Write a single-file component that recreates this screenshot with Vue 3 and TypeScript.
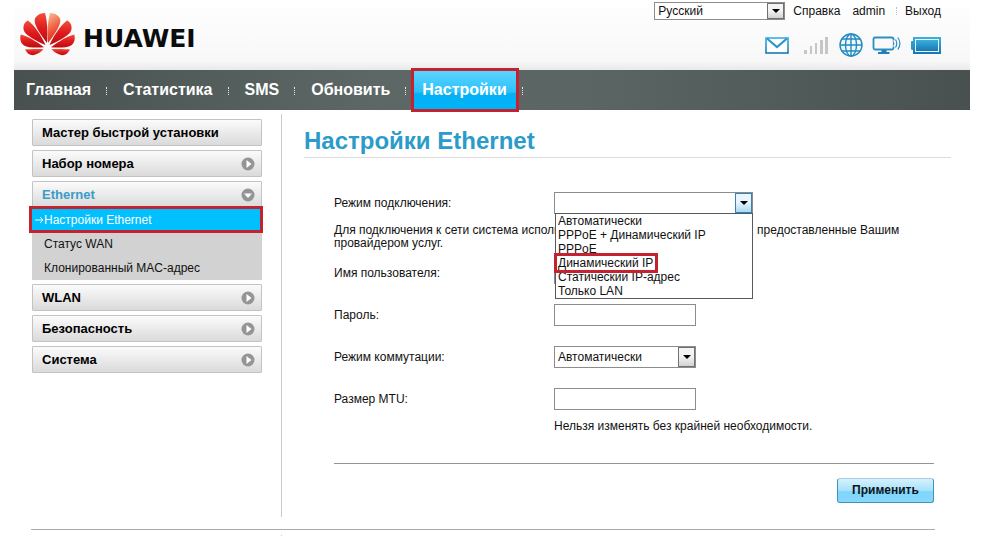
<script setup lang="ts">
import { ref } from 'vue'

interface MenuItem {
  label: string
  state: 'plain' | 'closed' | 'open'
  children?: string[]
}

const topNav: string[] = ['Главная', 'Статистика', 'SMS', 'Обновить', 'Настройки']
const activeNav = 'Настройки'

const menu: MenuItem[] = [
  { label: 'Мастер быстрой установки', state: 'plain' },
  { label: 'Набор номера', state: 'closed' },
  { label: 'Ethernet', state: 'open', children: ['Настройки Ethernet', 'Статус WAN', 'Клонированный MAC-адрес'] },
  { label: 'WLAN', state: 'closed' },
  { label: 'Безопасность', state: 'closed' },
  { label: 'Система', state: 'closed' },
]
const activePage = 'Настройки Ethernet'

const modes: string[] = [
  'Автоматически',
  'PPPoE + Динамический IP',
  'PPPoE',
  'Динамический IP',
  'Статический IP-адрес',
  'Только LAN',
]
const marked = 'Динамический IP'

const language = ref('Русский')
const mode = ref('')
const switching = ref('Автоматически')
const user = ref('')
const password = ref('')
const mtu = ref('')
</script>

<template>
  <div class="page">
    <header class="header">
      <a class="brand" href="#">
        <svg class="flower" viewBox="0 0 56 44" aria-hidden="true">
          <defs>
            <linearGradient id="petal" x1="0" y1="0" x2="0" y2="1">
              <stop offset="0" stop-color="#f0503c" />
              <stop offset="0.5" stop-color="#e01a1c" />
              <stop offset="1" stop-color="#b80c14" />
            </linearGradient>
            <linearGradient id="petalLight" x1="0.6" y1="0" x2="0.3" y2="1">
              <stop offset="0" stop-color="#f5b088" />
              <stop offset="0.5" stop-color="#ee5a3c" />
              <stop offset="1" stop-color="#d4141a" />
            </linearGradient>
          </defs>
          <g fill="url(#petal)">
            <path d="M27 31C27.800 21 27.400 9 25 1C20 1.300 16 3.500 14.800 7C13.500 13 21 23 27 31Z" />
            <path d="M25.500 33C21 23 14 13 8 8.500C4 10.500 2.500 14.500 4 19C6.500 24 18 30 25.500 33Z" />
            <path d="M24 35.300C16 29 7 24 .8 22.500C-.5 26.500 .5 31 4 33.500C8 36 18 35.800 24 35.300Z" />
            <path d="M23.500 37.200C17 36.800 9.500 37 5 37.500C7 41.500 10.500 43.800 14 43C17.500 42 21.500 39.500 23.500 37.200Z" />
          </g>
          <g fill="url(#petal)" transform="translate(55 0) scale(-1 1)">
            <path fill="url(#petalLight)" d="M27 31C27.800 21 27.400 9 25 1C20 1.300 16 3.500 14.800 7C13.500 13 21 23 27 31Z" />
            <path d="M25.500 33C21 23 14 13 8 8.500C4 10.500 2.500 14.500 4 19C6.500 24 18 30 25.500 33Z" />
            <path d="M24 35.300C16 29 7 24 .8 22.500C-.5 26.500 .5 31 4 33.500C8 36 18 35.800 24 35.300Z" />
            <path d="M23.500 37.200C17 36.800 9.500 37 5 37.500C7 41.500 10.500 43.800 14 43C17.500 42 21.500 39.500 23.500 37.200Z" />
          </g>
        </svg>
        <span class="wordmark">HUAWEI</span>
      </a>

      <div class="tools">
        <div class="account">
          <span class="pick pick-language">
            <select v-model="language" aria-label="Язык">
              <option>Русский</option>
            </select>
            <span class="arrow"></span>
          </span>
          <a href="#">Справка</a>
          <a class="admin" href="#">admin</a>
          <span class="divider"></span>
          <a href="#">Выход</a>
        </div>
        <div class="status">
          <svg width="24" height="24" viewBox="0 0 24 24" aria-hidden="true">
            <defs>
              <linearGradient id="sky" x1="0" y1="0" x2="0" y2="1">
                <stop offset="0" stop-color="#38b0dc" />
                <stop offset="1" stop-color="#1878b4" />
              </linearGradient>
            </defs>
            <rect x="1" y="5" width="22" height="15" fill="#fff" stroke="url(#sky)" stroke-width="1.600" />
            <path d="M2 5.500L12 14L22 5.500" fill="none" stroke="#2a98cc" stroke-width="2.200" />
          </svg>
          <svg width="26" height="24" viewBox="0 0 26 24" fill="#c4c6c8" aria-hidden="true">
            <rect x="0" y="17" width="3" height="4" />
            <rect x="6" y="13" width="2" height="8" />
            <rect x="11" y="10" width="2" height="11" />
            <rect x="16" y="7" width="3" height="14" />
            <rect x="21" y="4" width="3" height="17" />
          </svg>
          <svg width="24" height="24" viewBox="0 0 24 24" fill="none" stroke="#2489c0" stroke-width="1.400" aria-hidden="true">
            <circle cx="12" cy="12" r="11" fill="#eef9fd" />
            <ellipse cx="12" cy="12" rx="5.500" ry="11" />
            <path d="M12 1V23M1 12H23M3 6H21M3 18H21" />
          </svg>
          <svg width="30" height="24" viewBox="0 0 30 24" fill="none" stroke="#2c8fc4" aria-hidden="true">
            <path d="M20.500 4.500H3Q1.500 4.500 1.500 6V15Q1.500 16.500 3 16.500H20Q21.500 16.500 21.500 15V13.500M21.500 7.500V6Q21.500 4.500 20 4.500" stroke-width="1.800" />
            <path d="M9.500 17H14.500V19H17.500V21H6V19H9.500Z" fill="#1f7fb8" stroke="none" />
            <path d="M21 8.500Q22.500 10.500 21 12.500M23.500 6.500Q26 10.500 23.500 14.500M25.800 4.500Q30 10.500 25.800 16.500" stroke-width="1.200" />
          </svg>
          <svg width="30" height="24" viewBox="0 0 30 24" aria-hidden="true">
            <rect x="0" y="8" width="4" height="9" rx="1" fill="#2c98cc" />
            <rect x="3" y="5" width="26" height="15" fill="#eaf8fe" stroke="url(#sky)" stroke-width="2" />
            <rect x="5" y="7" width="22" height="11" fill="url(#sky)" />
          </svg>
        </div>
      </div>
    </header>

    <nav class="nav" aria-label="Разделы">
      <a v-for="item in topNav" :key="item" href="#" :class="{ active: item === activeNav }">
        <span>{{ item }}</span>
      </a>
    </nav>

    <div class="body">
      <aside class="sidebar">
        <div v-for="item in menu" :key="item.label" class="group">
          <button type="button" class="head" :class="item.state">
            <span>{{ item.label }}</span>
            <svg v-if="item.state !== 'plain'" width="14" height="14" viewBox="0 0 14 14" aria-hidden="true">
              <circle cx="7" cy="7" r="6.500" fill="#959595" />
              <path v-if="item.state === 'closed'" d="M5.500 3L10.500 7L5.500 11Z" fill="#fff" />
              <path v-else d="M3 5.500L11 5.500L7 10Z" fill="#fff" />
            </svg>
          </button>
          <div v-if="item.children" class="children">
            <a v-for="child in item.children" :key="child" href="#" :class="{ current: child === activePage }">
              <svg v-if="child === activePage" width="9" height="8" viewBox="0 0 9 8" aria-hidden="true">
                <path d="M0 4H8M5 1L8 4L5 7" fill="none" stroke="#fff" />
              </svg>
              {{ child }}
            </a>
          </div>
        </div>
      </aside>

      <main class="content">
        <h1>Настройки Ethernet</h1>
        <form @submit.prevent>
          <div class="row">
            <label for="mode">Режим подключения:</label>
            <div class="combo">
              <span class="pick pick-open">
                <select id="mode" v-model="mode">
                  <option value=""></option>
                  <option v-for="m in modes" :key="m">{{ m }}</option>
                </select>
                <span class="arrow"></span>
              </span>
              <ul class="list">
                <li v-for="m in modes" :key="m"><span :class="{ marked: m === marked }">{{ m }}</span></li>
              </ul>
            </div>
          </div>
          <p class="note">Для подключения к сети система использует логин пользователя и пароль, предоставленные Вашим провайдером услуг.</p>
          <div class="row">
            <label for="user">Имя пользователя:</label>
            <input id="user" v-model="user" type="text" />
          </div>
          <div class="row">
            <label for="password">Пароль:</label>
            <input id="password" v-model="password" type="password" />
          </div>
          <div class="row">
            <label for="switching">Режим коммутации:</label>
            <span class="pick pick-short">
              <select id="switching" v-model="switching">
                <option>Автоматически</option>
              </select>
              <span class="arrow"></span>
            </span>
          </div>
          <div class="row last">
            <label for="mtu">Размер MTU:</label>
            <input id="mtu" v-model="mtu" type="text" />
          </div>
          <p class="hint">Нельзя изменять без крайней необходимости.</p>
          <div class="actions">
            <button type="submit" class="apply">Применить</button>
          </div>
        </form>
      </main>
    </div>
    <footer class="footer"></footer>
  </div>
</template>

<style>
body {
  background: #fff;
}
</style>

<style scoped>
.page {
  margin: 0 14px;
  font-family: "Liberation Sans", Arial, sans-serif;
  font-size: 12px;
  line-height: 14px;
  color: #111;
}
.page *,
.page *::before,
.page *::after {
  box-sizing: border-box;
}
a {
  color: inherit;
  text-decoration: none;
}
select,
input,
button {
  font: inherit;
  color: inherit;
  margin: 0;
}

/* header */
.header {
  display: flex;
  justify-content: space-between;
  height: 70px;
  padding: 2px 29px 0 6px;
  background: linear-gradient(#fff 0%, #f9f9f9 70%, #f7f7f7 88%, #e9e9e9 100%);
}
.brand {
  display: flex;
  align-items: flex-start;
  gap: 7px;
  padding-top: 10px;
}
.flower {
  width: 56px;
  height: 44px;
}
.wordmark {
  padding-top: 13px;
  font-family: "DejaVu Sans", sans-serif;
  font-size: 25px;
  font-weight: bold;
  line-height: 28px;
  color: #0c0c0c;
}
.tools {
  display: flex;
  flex-direction: column;
  align-items: flex-end;
  gap: 13px;
}
.account {
  display: flex;
  align-items: center;
  height: 18px;
}
.account .pick {
  margin-right: 8px;
}
.admin {
  margin-left: 12px;
}
.divider {
  height: 8px;
  margin: 0 8px 0 11px;
  border-left: 1px dotted #c0c0c0;
}
.status {
  display: flex;
  gap: 9px;
}
.status svg:first-child {
  margin-right: 6px;
}

/* drop-downs */
.pick {
  position: relative;
  display: block;
  height: 22px;
}
.pick select {
  display: block;
  width: 100%;
  height: 100%;
  padding: 0 20px 0 3px;
  border: 1px solid #8c8c8c;
  border-radius: 0;
  background: #fff;
  appearance: none;
}
.arrow {
  position: absolute;
  top: 1px;
  right: 1px;
  bottom: 1px;
  width: 17px;
  display: grid;
  place-items: center;
  border: 1px solid #707070;
  background: linear-gradient(#f4f4f4 45%, #d2d2d2);
  pointer-events: none;
}
.arrow::before {
  content: "";
  border: 4px solid transparent;
  border-top-color: #000;
  border-bottom: 0;
}
.pick-language {
  width: 131px;
  height: 18px;
}
.pick-short {
  width: 142px;
}
.pick-open .arrow {
  border-color: #3c7fb1;
  background: linear-gradient(#eaf6fd 45%, #a9d9f2);
}

/* top navigation */
.nav {
  display: flex;
  height: 40px;
  padding-right: 8px;
  background: linear-gradient(90deg, #485150, #5c6766 38%, #5a6564 60%, #485150);
  color: #fff;
  font-size: 16px;
  font-weight: bold;
  line-height: 18px;
}
.nav a {
  position: relative;
  display: flex;
  align-items: center;
  padding: 0 16px;
}
.nav a:first-child {
  padding-left: 12px;
}
.nav a::after {
  content: "";
  position: absolute;
  right: 0;
  top: 17px;
  height: 8px;
  border-right: 1px dotted #e4e8e8;
}
.nav .active::before {
  content: "";
  position: absolute;
  inset: -2px 4px -2px 5px;
  border: 3px solid #c4222f;
  background: linear-gradient(#5cd4ff, #2cc0fa 55%, #04b0f4 60%, #00b4f8);
}
.nav .active span {
  position: relative;
}

/* body */
.body {
  display: flex;
  padding-top: 4px;
}
.sidebar {
  flex: none;
  display: flex;
  flex-direction: column;
  gap: 4px;
  width: 267px;
  padding: 5px 19px 0 18px;
}
.head {
  display: flex;
  align-items: center;
  justify-content: space-between;
  width: 100%;
  height: 27px;
  padding: 0 6px 0 9px;
  border: 1px solid #c3c3c3;
  border-radius: 1px;
  background: linear-gradient(#fbfbfb, #dadada);
  color: #000;
  font-size: 13px;
  font-weight: bold;
  text-align: left;
}
.head.open {
  color: #3a9cc8;
}
.children {
  background: #d2d2d2;
}
.children a {
  position: relative;
  display: flex;
  align-items: center;
  height: 24px;
  padding-left: 12px;
}
.children .current {
  background: #00c0ff;
  color: #fff;
}
.children .current::after {
  content: "";
  position: absolute;
  inset: -2px -1px -1px -3px;
  border: 3px solid #c4222f;
}
.children svg {
  position: absolute;
  left: 3px;
}

.content {
  flex: 1;
  padding: 13px 19px 14px 22px;
  border-left: 1px solid #cbcbcb;
}
h1 {
  margin: 0;
  padding-bottom: 2px;
  border-bottom: 1px solid #dcdcdc;
  color: #2b9bc9;
  font-size: 24px;
  line-height: 28px;
}
form {
  padding: 34px 17px 0 30px;
}
.row {
  display: flex;
  align-items: center;
  margin-bottom: 20px;
}
.row label {
  width: 220px;
}
.row input {
  width: 142px;
  height: 22px;
  padding: 0 3px;
  border: 1px solid #8c8c8c;
  border-radius: 0;
  background: #fff;
}
.combo {
  position: relative;
  width: 199px;
}
.list {
  position: absolute;
  z-index: 1;
  top: 21px;
  left: 1px;
  right: 0;
  margin: 0;
  padding: 0 2px;
  border: 1px solid #555a60;
  background: #fff;
  list-style: none;
}
.marked {
  position: relative;
}
.marked::after {
  content: "";
  position: absolute;
  inset: -3px -5px -3px -4px;
  border: 3px solid #c4222f;
}
.note {
  margin: -10px 0 12px;
  padding-right: 20px;
  line-height: 13px;
}
.row.last {
  margin-bottom: 9px;
}
.hint {
  margin: 0 0 30px 220px;
}
.actions {
  display: flex;
  justify-content: flex-end;
  padding-top: 14px;
  border-top: 1px solid #949494;
}
.apply {
  width: 97px;
  height: 25px;
  padding: 0 0 2px;
  border: 1px solid #3f94b8;
  border-top-color: #a5cfe0;
  border-radius: 3px;
  background: linear-gradient(#d6f1fd, #a6e1fb 50%, #7fd5fb 55%, #86d9fc);
  font-weight: bold;
  color: #0a1420;
}
.footer {
  margin: 12px 35px 0 17px;
  padding: 5px 0 0 250px;
  border-top: 1px solid #ababab;
}
.footer::before {
  content: "";
  display: block;
  height: 1px;
  border-left: 1px solid #cbcbcb;
}
</style>
